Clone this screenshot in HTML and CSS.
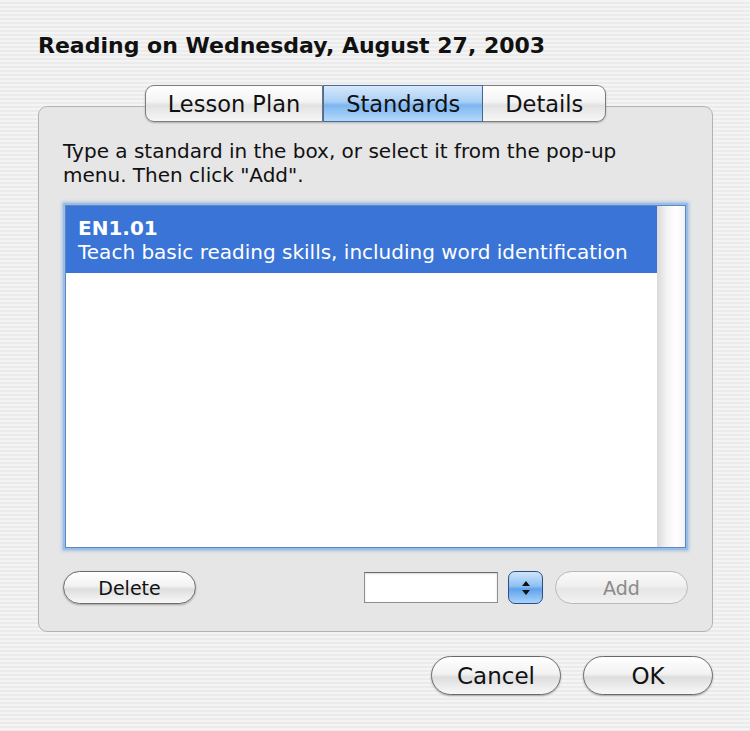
FILE: index.html
```html
<!DOCTYPE html>
<html lang="en">
<head>
    <meta charset="UTF-8">
    <title>Reading on Wednesday, August 27, 2003</title>
    <link rel="stylesheet" href="styles.css">
</head>
<body>
    <div class="dialog">
        <h1>Reading on Wednesday, August 27, 2003</h1>

        <div class="tabs">
            <button class="tab">Lesson Plan</button>
            <button class="tab selected">Standards</button>
            <button class="tab">Details</button>
        </div>

        <div class="group">
            <p class="hint">Type a standard in the box, or select it from the pop-up menu. Then click "Add".</p>

            <div class="list">
                <div class="rows">
                    <div class="row selected">
                        <strong>EN1.01</strong>
                        <span>Teach basic reading skills, including word identification</span>
                    </div>
                </div>
                <div class="scroll-track"></div>
            </div>

            <div class="controls">
                <button class="btn small">Delete</button>
                <div class="add-group">
                    <input type="text" class="field">
                    <button class="stepper" aria-label="Choose standard">
                        <svg width="10" height="18" viewBox="0 0 10 18">
                            <path d="M5 2 L9 7 L1 7 Z" fill="#111"/>
                            <path d="M5 16 L9 11 L1 11 Z" fill="#111"/>
                        </svg>
                    </button>
                    <button class="btn small" disabled>Add</button>
                </div>
            </div>
        </div>

        <div class="footer">
            <button class="btn">Cancel</button>
            <button class="btn">OK</button>
        </div>
    </div>
</body>
</html>
```

FILE: styles.css
```css
body {
    margin: 0;
    font-family: "DejaVu Sans", "Liberation Sans", sans-serif;
    color: #111;
    background: repeating-linear-gradient(#f4f4f4 0, #f4f4f4 2px, #ebebeb 2px, #ebebeb 4px);
    height: 731px;
}
.dialog {
    padding: 33px 37px 0 38px;
}
h1 {
    margin: 0;
    font-size: 22px;
    line-height: 26px;
    font-weight: bold;
}
.tabs {
    display: flex;
    justify-content: center;
    margin-top: 26px;
    margin-bottom: -16px;
    position: relative;
    z-index: 1;
}
.tab {
    font-family: inherit;
    font-size: 22.5px;
    color: #111;
    height: 37px;
    padding: 0 22px;
    border: 1px solid #7c7c7c;
    border-left: none;
    background: linear-gradient(#ffffff 0%, #f4f4f4 45%, #e2e2e2 55%, #f7f7f7 100%);
    box-shadow: 0 1px 2px rgba(0, 0, 0, 0.25);
}
.tab:first-child {
    border-left: 1px solid #7c7c7c;
    border-radius: 9px 0 0 9px;
}
.tab:last-child {
    border-radius: 0 9px 9px 0;
}
.tab.selected {
    background: linear-gradient(#d6e8fb 0%, #a9cff6 45%, #7db6f0 55%, #b4d8fb 100%);
    border-color: #4a6e9c;
    border-left: 1px solid #4a6e9c;
}
.group {
    border: 1px solid #b3b3b3;
    border-radius: 9px;
    background: #e6e6e6;
    padding: 32px 24px 26px;
}
.hint {
    margin: 0;
    font-size: 20px;
    line-height: 24px;
    max-width: 580px;
}
.list {
    display: flex;
    margin: 18px 2px 0;
    height: 341px;
    background: #fff;
    border: 1px solid #5f86bd;
    box-shadow: 0 0 0 2px #98bde9, 0 0 3px 3px rgba(110, 160, 225, 0.55);
}
.rows {
    flex: 1;
}
.row {
    padding: 10px 12px 9px;
    font-size: 20px;
    line-height: 24px;
}
.row strong,
.row span {
    display: block;
    white-space: nowrap;
}
.row.selected {
    background: #3a74d6;
    color: #fff;
}
.scroll-track {
    width: 28px;
    background: linear-gradient(to right, #d9d9d9, #f4f4f4 35%, #ffffff 70%, #f2f2f2);
}
.controls {
    display: flex;
    justify-content: space-between;
    align-items: center;
    margin-top: 22px;
    height: 35px;
}
.add-group {
    display: flex;
    align-items: center;
    gap: 10px;
}
.field {
    width: 132px;
    height: 29px;
    padding: 0;
    border: 1px solid #8e8e8e;
    border-top-color: #6a6a6a;
    background: #fff;
    box-shadow: inset 0 1px 2px rgba(0, 0, 0, 0.15);
}
.stepper {
    width: 35px;
    height: 33px;
    display: flex;
    align-items: center;
    justify-content: center;
    padding: 0;
    margin-right: 2px;
    border: 1px solid #2d4f80;
    border-radius: 7px;
    background: linear-gradient(#cfe5fb 0%, #8fc1f2 45%, #5fa2ea 55%, #a8d4fb 100%);
}
.btn {
    font-family: inherit;
    font-size: 23px;
    color: #111;
    width: 130px;
    height: 39px;
    border: 1px solid #6a6a6a;
    border-radius: 20px;
    background: linear-gradient(#ffffff 0%, #f2f2f2 45%, #dedede 55%, #f8f8f8 100%);
    box-shadow: 0 1px 2px rgba(0, 0, 0, 0.3);
}
.btn.small {
    font-size: 19px;
    width: 133px;
    height: 33px;
    border-radius: 17px;
}
.btn:disabled {
    color: #8a8a8a;
    border-color: #b9b9b9;
    background: linear-gradient(#fafafa 0%, #efefef 45%, #e6e6e6 55%, #f2f2f2 100%);
    box-shadow: none;
}
.footer {
    display: flex;
    justify-content: flex-end;
    gap: 22px;
    margin-top: 24px;
}
```
